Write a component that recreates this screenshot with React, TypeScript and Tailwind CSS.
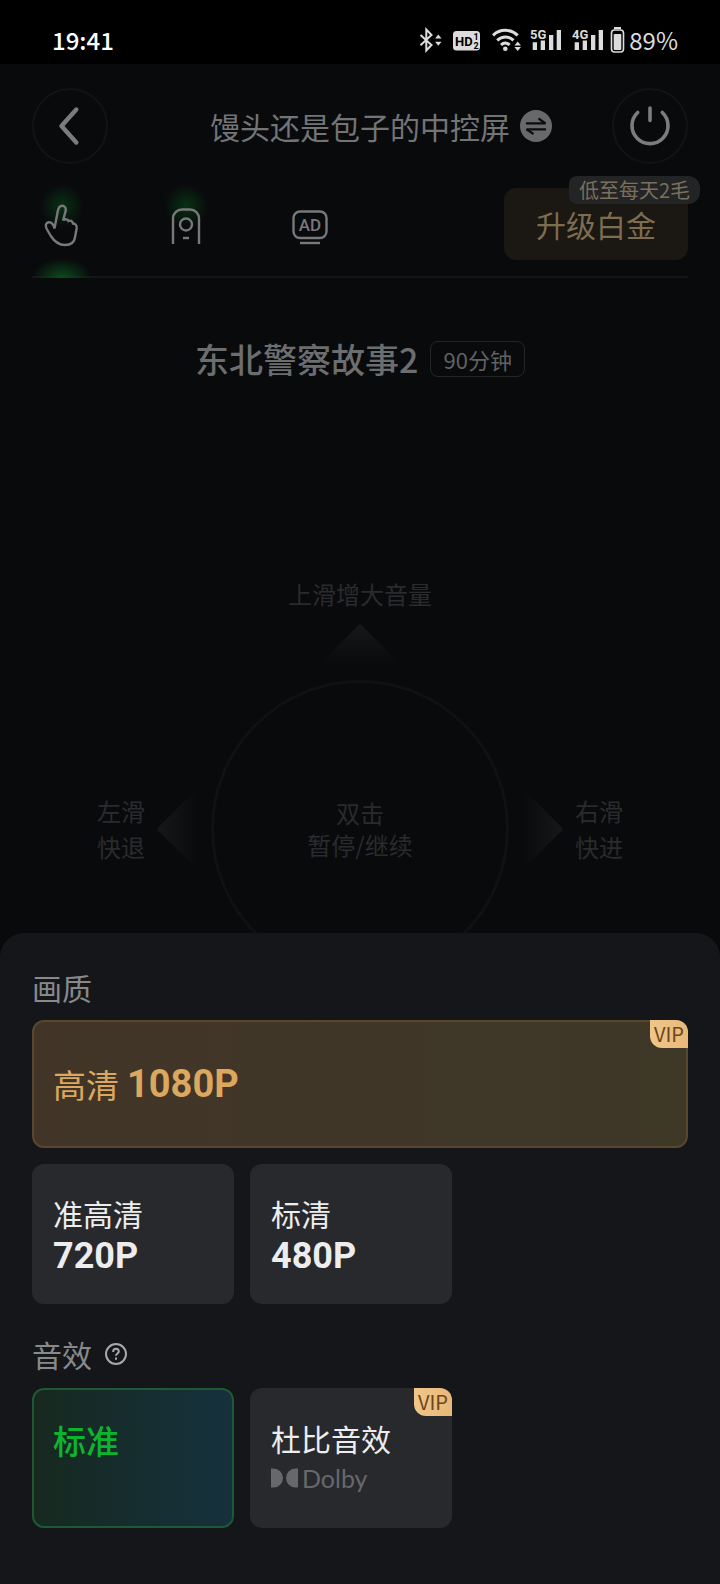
import { ReactNode, useState } from "react";
import clsx from "clsx";

function StatusBar() {
  return (
    <div className="flex h-16 items-center justify-between bg-black pt-4 pr-[42px] pl-[52px]">
      <span className="text-2xl leading-8 font-medium text-white">19:41</span>
      <div className="flex items-center text-[#dcdcdc]">
        <svg className="mr-[10px]" width="24" height="28" viewBox="0 0 24 28" aria-label="蓝牙">
          <path d="M1.5 9 12.5 19 7.3 24.5V3.5L12.5 9 1.5 19.3" fill="none" stroke="currentColor" strokeWidth="2" />
          <path d="M19.3 8.5l3.2 4h-6.4zM19.3 19.7l3.2-4h-6.4z" fill="currentColor" />
        </svg>
        <svg className="mr-3" width="27" height="28" viewBox="0 0 27 28">
          <rect y="5" width="27" height="19.5" rx="3.5" fill="currentColor" />
          <text x="2" y="19.500" fontSize="13" fontWeight="700" fontFamily="Roboto, sans-serif" fill="#000">HD</text>
          <text x="20.500" y="14" fontSize="9" fontWeight="700" fontFamily="Roboto, sans-serif" fill="#000">1</text>
          <text x="20.500" y="23" fontSize="9" fontWeight="700" fontFamily="Roboto, sans-serif" fill="#000">2</text>
        </svg>
        <svg className="mr-2" width="30" height="28" viewBox="0 0 30 28" aria-label="WLAN">
          <g fill="none" stroke="currentColor" strokeWidth="3">
            <path d="M1 9.3C8 2.7 18.7 2.7 25.7 9.3" />
            <path d="M5.2 14.3C10 9.8 16.7 9.8 21.5 14.3" />
            <path d="M9 19c2.6-2.6 6-2.6 8.6 0" />
          </g>
          <circle cx="13.3" cy="22.8" r="2.3" fill="currentColor" />
          <path d="M25.7 15.5l3.3 3.9h-6.6zM25.7 25l3.3-3.9h-6.6z" fill="currentColor" />
        </svg>
        <Signal label="5G" />
        <Signal label="4G" />
        <svg className="-ml-1" width="15" height="28" viewBox="0 0 15 28" aria-label="电池">
          <rect x="4" y="1" width="7" height="2" fill="currentColor" />
          <rect x="1.5" y="4" width="12" height="22" rx="3" fill="none" stroke="currentColor" strokeWidth="1.6" />
          <rect x="3.7" y="8" width="7.6" height="16" rx="1" fill="currentColor" />
        </svg>
        <span className="ml-1 text-2xl leading-8">89%</span>
      </div>
    </div>
  );
}

function Signal({ label }: { label: string }) {
  return (
    <svg className="mr-[10px]" width="32" height="28" viewBox="0 0 32 28" aria-label={label}>
      <path d="M2.7 16.3h4.3v7.7h-4.3zM10.7 14.5h4.3v9.5h-4.3zM19 9h4.3v15h-4.3zM26.7 4h4.3v20h-4.3z" fill="currentColor" />
      <text x="0" y="12.5" fontSize="13" fontWeight="700" fontFamily="Roboto, sans-serif" fill="currentColor">
        {label}
      </text>
    </svg>
  );
}

function Header() {
  return (
    <header className="flex items-center px-8 pt-6">
      <button type="button" aria-label="返回" className="flex size-[76px] items-center justify-center rounded-full border-2 border-[#121315]">
        <svg width="40" height="40" viewBox="-20 -20 40 40">
          <path d="M6.3-16.5-8.5 0 6.3 16.5" fill="none" stroke="#7c7c7e" strokeWidth="4.4" strokeLinecap="round" strokeLinejoin="round" />
        </svg>
      </button>
      <div className="flex flex-1 items-center justify-center gap-[10px] pl-[42px]">
        <h1 className="text-3xl leading-10 text-[#737476]">馒头还是包子的中控屏</h1>
        <button type="button" aria-label="切换设备">
          <svg width="32" height="32" viewBox="-16 -16 32 32">
            <circle r="16" fill="#68696b" />
            <path d="M-10-2.7H9.5L2.5-7.5M10 3.3H-9.5L-2.5 8" fill="none" stroke="#0c0d0f" strokeWidth="2.2" strokeLinejoin="bevel" />
          </svg>
        </button>
      </div>
      <button type="button" aria-label="电源" className="flex size-[76px] items-center justify-center rounded-full border-2 border-[#121315]">
        <svg width="44" height="44" viewBox="-22 -22 44 44">
          <path d="M-12.3-13.5A18 18 0 1 0 12.3-13.5M0-18V-5.5" fill="none" stroke="#7c7c7e" strokeWidth="3.6" strokeLinecap="round" />
        </svg>
      </button>
    </header>
  );
}

const tabs: { name: string; icon: ReactNode }[] = [
  {
    name: "手势",
    icon: (
      <path d="M16.5 28.5 19.8 11C20.600 7.500 22.500 5.300 25 5.800 27.500 6.400 28.200 8.800 27.500 11.500L25 20.500C26 18.800 29.500 18.600 30.500 21 32 20 34.600 21 35 23.500 37.200 23.500 39 25.200 38.700 28L37.200 36.500C36.500 42 32.500 45 27 45 20 45 16 41 12.500 35.500L8.500 28.500C7 25.500 8 22.700 10.500 22.300 13.500 22 15.500 24.500 16.500 28.500Z" />
    ),
  },
  {
    name: "遥控器",
    icon: (
      <>
        <path d="M11 44V18.5a9 9 0 0 1 9-9h8a9 9 0 0 1 9 9V44" />
        <circle cx="24" cy="24.5" r="6" />
        <path d="M21 38h6" />
      </>
    ),
  },
  {
    name: "广告",
    icon: (
      <>
        <rect x="7.5" y="11.5" width="33" height="26.5" rx="6.5" />
        <path d="M14 43h20" />
        <text x="24" y="31" textAnchor="middle" fontSize="17" fontWeight="500" fontFamily="Roboto, sans-serif" fill="#77787a" stroke="none">
          AD
        </text>
      </>
    ),
  },
];

function TabBar() {
  const [active, setActive] = useState(0);

  return (
    <div className="mx-8 mt-6 flex items-center justify-between border-b-2 border-[#131416] pb-4">
      <nav className="flex gap-16">
        {tabs.map((tab, i) => (
          <button
            key={tab.name}
            type="button"
            aria-label={tab.name}
            onClick={() => setActive(i)}
            className="relative flex h-[72px] w-[60px] items-center justify-center"
          >
            {i < 2 && (
              <span className="absolute -top-1 left-2 h-11 w-11 bg-[radial-gradient(closest-side,#064a1899,#064a1800)]" />
            )}
            {active === i && (
              <span className="absolute -bottom-[18px] left-0 h-5 w-[60px] bg-[radial-gradient(ellipse_at_bottom,#0c4a1e,#0c4a1e00_70%)]" />
            )}
            <svg className="relative" width="48" height="48" viewBox="0 0 48 48" fill="none" stroke="#77787a" strokeWidth="2.4">
              {tab.icon}
            </svg>
          </button>
        ))}
      </nav>
      <button type="button" className="relative h-[72px] w-[184px] rounded-xl bg-[#1b1713] text-3xl leading-10 text-[#7d6d50]">
        升级白金
        <span className="absolute -top-3 -right-3 rounded-l-lg rounded-r-xl bg-[#232426] px-[10px] text-xl leading-7 whitespace-nowrap text-[#7b705b]">
          低至每天2毛
        </span>
      </button>
    </div>
  );
}

function Arrow({ id, direction }: { id: string; direction: "up" | "left" | "right" }) {
  return (
    <svg
      className={clsx(
        "shrink-0",
        direction === "left" && "-rotate-90",
        direction === "right" && "rotate-90"
      )}
      width="80"
      height="40"
      viewBox="0 0 80 40"
    >
      <linearGradient id={id} x1="0" y1="0" x2="0" y2="1">
        <stop offset="0" stopColor="#17181a" />
        <stop offset="1" stopColor="#17181a" stopOpacity="0" />
      </linearGradient>
      <path d="M38 1.5a3 3 0 0 1 4 0L80 40H0Z" fill={`url(#${id})`} />
    </svg>
  );
}

function GesturePad() {
  return (
    <section className="mt-[197px] flex flex-col items-center text-2xl leading-9 text-[#2a2b2d]">
      <p>上滑增大音量</p>
      <div className="mt-3 mb-4">
        <Arrow id="arrow-up" direction="up" />
      </div>
      <div className="flex items-center justify-center">
        <p>左滑<br />快退</p>
        <div className="mx-3 flex w-10 justify-center">
          <Arrow id="arrow-left" direction="left" />
        </div>
        <div className="mx-0.5 flex size-[298px] items-center justify-center rounded-full border-3 border-[#101113] text-center leading-8">
          双击<br />暂停/继续
        </div>
        <div className="mx-3 flex w-10 justify-center">
          <Arrow id="arrow-right" direction="right" />
        </div>
        <p>右滑<br />快进</p>
      </div>
    </section>
  );
}

function VipBadge() {
  return (
    <span className="absolute -top-0.5 -right-0.5 rounded-tr-xl rounded-bl-xl bg-linear-to-r from-[#f0c68c] to-[#e9b878] px-1 text-xl leading-7 text-[#6b4718]">
      VIP
    </span>
  );
}

function OptionCard({ vip, className, children }: { vip?: boolean; className?: string; children: ReactNode }) {
  return (
    <button
      type="button"
      className={clsx("relative flex flex-col items-start rounded-xl border-2 px-[19px] text-left", className)}
    >
      {children}
      {vip && <VipBadge />}
    </button>
  );
}

function QualitySheet() {
  return (
    <section className="relative z-10 -mt-[45px] flex-1 rounded-t-3xl bg-[#15161a] px-8 pt-[34px] pb-12 text-[#ededee]">
      <h2 className="text-3xl leading-10 text-[#88898b]">画质</h2>
      <OptionCard
        vip
        className="mt-[13px] h-32 w-full justify-center border-[#58472c] bg-linear-to-r from-[#423527] to-[#3e3827] text-[#dca75f]"
      >
        <span className="flex items-center gap-2 text-[33px] leading-10">
          高清
          <span className="font-['Roboto'] text-[38px] font-bold">1080P</span>
        </span>
      </OptionCard>
      <div className="mt-4 flex gap-4">
        <OptionCard className="h-[140px] w-[202px] justify-center gap-[3px] border-[#28292d] bg-[#28292d]">
          <span className="text-3xl leading-10">准高清</span>
          <span className="font-['Roboto'] text-4xl leading-10 font-bold">720P</span>
        </OptionCard>
        <OptionCard className="h-[140px] w-[202px] justify-center gap-[3px] border-[#28292d] bg-[#28292d]">
          <span className="text-3xl leading-10">标清</span>
          <span className="font-['Roboto'] text-4xl leading-10 font-bold">480P</span>
        </OptionCard>
      </div>

      <div className="mt-[30px] flex items-center gap-3">
        <h2 className="text-3xl leading-10 text-[#88898b]">音效</h2>
        <button type="button" aria-label="音效说明">
          <svg width="24" height="24" viewBox="0 0 24 24" fill="none" stroke="#a8a9ab" strokeWidth="2">
            <circle cx="12" cy="12" r="10" />
            <path d="M9.2 10V9.6a2.8 2.8 0 0 1 5.6 0c0 1.9-2.8 2.1-2.8 4.2" />
            <path d="M12 15.5v2.2" />
          </svg>
        </button>
      </div>
      <div className="mt-[14px] flex gap-4">
        <OptionCard className="h-[140px] w-[202px] border-[#1d5a34] bg-linear-to-r from-[#17291f] to-[#15313d] pt-[30px] text-[33px] leading-10 font-medium text-[#0db52f]">
          标准
        </OptionCard>
        <OptionCard vip className="h-[140px] w-[202px] border-[#28292d] bg-[#28292d] pt-7">
          <span className="text-3xl leading-10">杜比音效</span>
          <span className="flex items-center gap-1 font-['Lato'] text-[25px] leading-10 text-[#67686b]">
            <svg width="27" height="20" viewBox="0 0 27 20" fill="currentColor">
              <path d="M0 .5h2.5a9.5 9.5 0 0 1 0 19H0zM27 .5h-2.5a9.500 9.500 0 0 0 0 19H27z" />
            </svg>
            Dolby
          </span>
        </OptionCard>
      </div>
    </section>
  );
}

export default function App() {
  return (
    <main className="flex min-h-screen flex-col overflow-hidden bg-[#090a0c] font-['Noto_Sans_CJK_SC',sans-serif]">
      <StatusBar />
      <Header />
      <TabBar />
      <div className="mt-[61px] flex items-center justify-center gap-3">
        <h2 className="text-[34px] leading-10 font-medium text-[#6c6d6f]">东北警察故事2</h2>
        <span className="rounded-lg border border-[#242527] px-3 text-[22px] leading-[34px] text-[#606163]">90分钟</span>
      </div>
      <GesturePad />
      <QualitySheet />
    </main>
  );
}
